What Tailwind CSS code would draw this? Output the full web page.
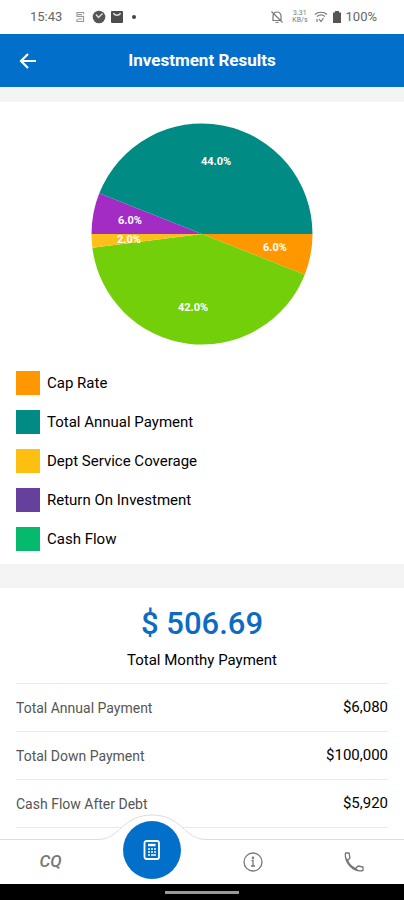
<!DOCTYPE html>
<html lang="en">
<head>
  <meta charset="UTF-8" />
  <meta name="viewport" content="width=device-width, initial-scale=1.0" />
  <title>Investment Results</title>
  <script src="https://cdn.jsdelivr.net/npm/@tailwindcss/browser@4"></script>
</head>
<body class="bg-white text-black font-[Roboto,sans-serif]">
  <div class="h-screen flex flex-col overflow-hidden">
    <!-- Status bar -->
    <div class="h-[34px] shrink-0 flex items-center justify-between pl-[30px] pr-[27px] text-[13px] text-[#666]">
      <div class="flex items-center">
        <span>15:43</span>
        <svg class="ml-3 size-3" viewBox="0 0 12 12" fill="none" stroke="#999" stroke-width="1.2"><path d="M9.5 3V1.500H3v3.800h6.500v5.200H3V8M4 3.500h4M4 8h4"/></svg>
        <svg class="ml-1.5 size-3.5" viewBox="0 0 14 14"><circle cx="7" cy="7" r="6.300" fill="#555"/><path d="M4 4.500l2.500 3 4-4" fill="none" stroke="#ddd" stroke-width="1.500"/></svg>
        <svg class="ml-1 size-3.5" viewBox="0 0 14 14"><rect x="1" y="1" width="12" height="12" rx="1" fill="#4d4d4d"/><path d="M3.500 3c1 3 6 3 7 0" fill="none" stroke="#ddd" stroke-width="1.300"/></svg>
        <svg class="ml-2 size-1" viewBox="0 0 4 4"><circle cx="2" cy="2" r="2" fill="#444"/></svg>
      </div>
      <div class="flex items-center">
        <svg class="size-3.5" viewBox="0 0 14 14" fill="none" stroke="#777" stroke-width="1.200"><path d="M3 10.500h8V6a4 4 0 0 0-8 0zM5.500 12.500h3M1.500 1.500l11 11"/></svg>
        <div class="ml-2 flex flex-col items-center text-[7px] leading-[7px] text-[#777]">
          <span>3.31</span>
          <span>KB/s</span>
        </div>
        <svg class="ml-1.5 size-3.5" viewBox="0 0 14 14" fill="none" stroke="#777" stroke-width="1.200"><path d="M1 4.500c3-3 9-3 12 0M3 6.500c2.500-2 5.500-2 8 0"/><path d="M5 9l2 2.500L9.500 8M3 9v3" /></svg>
        <svg class="ml-1 w-2.5 h-3.5" viewBox="0 0 10 14"><path d="M3 1h4v1.500h2V13H1V2.500h2z" fill="#555"/></svg>
        <span class="ml-1">100%</span>
      </div>
    </div>

    <!-- Title bar -->
    <header class="h-[53px] shrink-0 grid grid-cols-[56px_1fr_56px] items-center bg-[#0270cb] text-white">
      <button type="button" aria-label="Back" class="h-full flex items-center justify-center">
        <svg class="size-6" viewBox="0 0 24 24" fill="none" stroke="currentColor" stroke-width="2.200"><path d="M20 12H5.500M12 5l-7 7 7 7"/></svg>
      </button>
      <h1 class="text-center text-[17px] font-bold">Investment Results</h1>
    </header>

    <main class="flex-1 min-h-0 overflow-hidden flex flex-col gap-6 bg-[#f4f4f4] pt-[15px]">
      <!-- Chart -->
      <section class="bg-white px-4 pt-[21px] pb-[13px]">
        <svg class="block mx-auto size-[222px] text-[11px] font-bold" viewBox="-111 -111 222 222" role="img" aria-label="Investment breakdown">
          <path d="M0 0H110.500A110.500 110.500 0 0 1 102.740 40.680Z" fill="#ff9800"/>
          <path d="M0 0L102.740 40.680A110.500 110.500 0 0 1-109.630 13.850Z" fill="#72cf0a"/>
          <path d="M0 0L-109.630 13.850A110.500 110.500 0 0 1-110.500 0Z" fill="#fdc01b"/>
          <path d="M0 0H-110.500A110.500 110.500 0 0 1-102.740-40.680Z" fill="#a32cc4"/>
          <path d="M0 0L-102.740-40.680A110.500 110.500 0 0 1 110.500 0Z" fill="#008c84"/>
          <g fill="#fff" text-anchor="middle">
            <text x="14" y="-69">44.0%</text>
            <text x="-72" y="-10">6.0%</text>
            <text x="-73" y="9">2.0%</text>
            <text x="73" y="17">6.0%</text>
            <text x="-9" y="77">42.0%</text>
          </g>
        </svg>
        <ul class="mt-[26px] flex flex-col gap-[15px] text-[15px] leading-6">
          <li class="flex gap-[7px]"><span class="size-6 bg-[#ff9800]"></span>Cap Rate</li>
          <li class="flex gap-[7px]"><span class="size-6 bg-[#008c84]"></span>Total Annual Payment</li>
          <li class="flex gap-[7px]"><span class="size-6 bg-[#fdc010]"></span>Dept Service Coverage</li>
          <li class="flex gap-[7px]"><span class="size-6 bg-[#673f9c]"></span>Return On Investment</li>
          <li class="flex gap-[7px]"><span class="size-6 bg-[#05ba6c]"></span>Cash Flow</li>
        </ul>
      </section>

      <!-- Payments -->
      <section class="flex-1 bg-white px-4 pt-4">
        <p class="text-center text-[31px] leading-10 font-medium text-[#0a6cc4]">$ 506.69</p>
        <p class="mt-1 mb-[11px] text-center text-[15px] leading-6">Total Monthy Payment</p>
        <table class="w-full border-t border-[#e8e8e8]">
          <tbody>
            <tr class="h-12 border-b border-[#e8e8e8]">
              <th scope="row" class="text-left text-sm font-normal text-[#555]">Total Annual Payment</th>
              <td class="text-right text-[15px]">$6,080</td>
            </tr>
            <tr class="h-12 border-b border-[#e8e8e8]">
              <th scope="row" class="text-left text-sm font-normal text-[#555]">Total Down Payment</th>
              <td class="text-right text-[15px]">$100,000</td>
            </tr>
            <tr class="h-12 border-b border-[#e8e8e8]">
              <th scope="row" class="text-left text-sm font-normal text-[#555]">Cash Flow After Debt</th>
              <td class="text-right text-[15px]">$5,920</td>
            </tr>
          </tbody>
        </table>
      </section>
    </main>

    <!-- Bottom navigation -->
    <nav class="h-[45px] shrink-0 grid grid-cols-4 border-t border-[#ddd] bg-white text-[#777]">
      <a href="#" class="flex items-center justify-center text-[17px] font-medium italic">CQ</a>
      <div class="relative">
        <svg class="absolute bottom-0 left-1/2 -translate-x-1/2 w-[108px] h-[70px]" viewBox="0 0 108 70">
          <path d="M0 25.500C22 25.500 24 1 54 1S86 25.500 108 25.500V70H0Z" fill="#fff"/>
          <path d="M0 25.500C22 25.500 24 1 54 1S86 25.500 108 25.500" fill="none" stroke="#ddd"/>
        </svg>
        <a href="#" aria-label="Calculator" class="absolute bottom-[5px] left-1/2 -translate-x-1/2 size-[58px] rounded-full bg-[#0270cb] flex items-center justify-center">
          <svg class="size-6" viewBox="0 0 24 24" fill="none" stroke="#fff" stroke-width="1.800"><rect x="4.500" y="3" width="14.500" height="18" rx="2"/><path d="M8 7h7.500" stroke-width="2.400"/><path d="M8 11h2m1 0h2m1 0h2M8 14h2m1 0h2m1 0h2M8 17h2m1 0h5" stroke-width="1.600"/></svg>
        </a>
      </div>
      <a href="#" aria-label="Info" class="flex items-center justify-center">
        <svg class="size-5" viewBox="0 0 20 20" fill="none" stroke="currentColor" stroke-width="1.300"><circle cx="10" cy="10" r="9"/><path d="M8.500 8.500H10V14M8 14h4"/><circle cx="10" cy="5.800" r=".6" fill="currentColor"/></svg>
      </a>
      <a href="#" aria-label="Call" class="flex items-center justify-center">
        <svg class="size-5" viewBox="0 0 20 20" fill="none" stroke="currentColor" stroke-width="1.300" stroke-linejoin="round"><path d="M1.500 1h3.500l1 5-2.500 2.500C5 12 8 15 11.500 16.500L14 14l5 1v3.500c-4 .8-9-.3-13-4.500S.8 5.500 1.500 1ZM3.500 8.500L1.800 6M11.500 16.500l2.500 2"/></svg>
      </a>
    </nav>

    <!-- System gesture bar -->
    <div class="h-4 shrink-0 flex items-center justify-center bg-black">
      <div class="w-[74px] h-[3px] bg-[#999]"></div>
    </div>
  </div>
</body>
</html>
